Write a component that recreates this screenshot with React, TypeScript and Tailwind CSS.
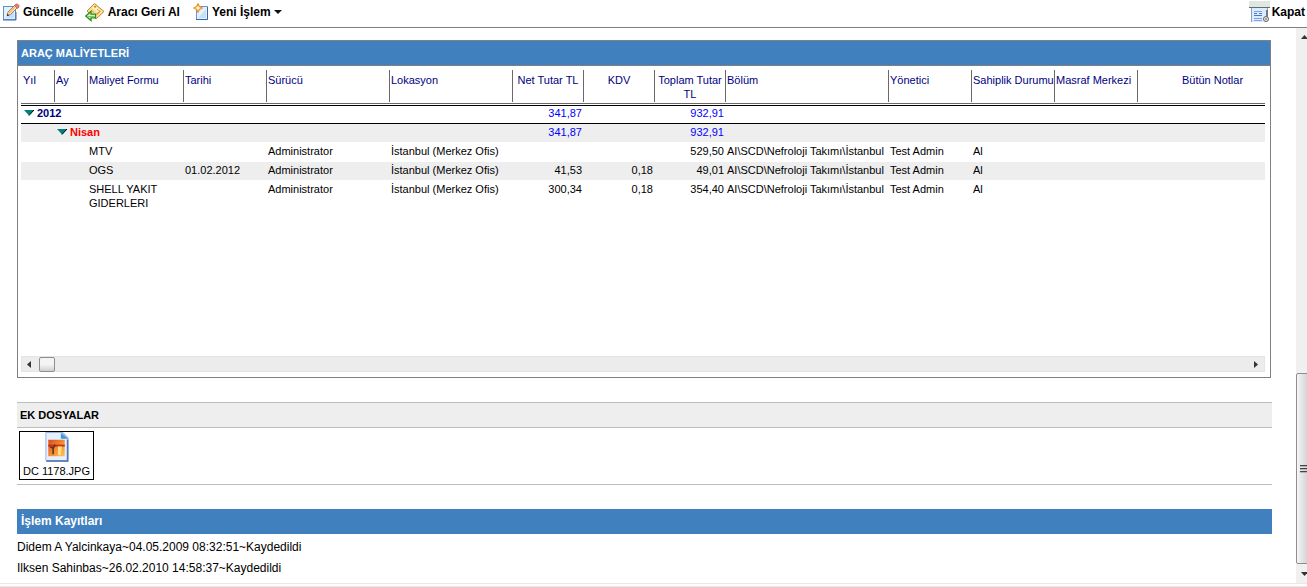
import { useState } from "react";
import clsx from "clsx";

type Align = "left" | "center" | "right";

interface Column {
  title: string;
  width: string;
  align: Align;
}

interface CostRow {
  form: string;
  date?: string;
  driver: string;
  location: string;
  net?: string;
  vat?: string;
  total: string;
  department: string;
  manager: string;
  ownership: string;
}

const columns: Column[] = [
  { title: "Yıl", width: "w-[34px]", align: "left" },
  { title: "Ay", width: "w-[33px]", align: "left" },
  { title: "Maliyet Formu", width: "w-[96px]", align: "left" },
  { title: "Tarihi", width: "w-[83px]", align: "left" },
  { title: "Sürücü", width: "w-[123px]", align: "left" },
  { title: "Lokasyon", width: "w-[123px]", align: "left" },
  { title: "Net Tutar TL", width: "w-[71px]", align: "center" },
  { title: "KDV", width: "w-[71px]", align: "center" },
  { title: "Toplam Tutar TL", width: "w-[71px]", align: "center" },
  { title: "Bölüm", width: "w-[163px]", align: "left" },
  { title: "Yönetici", width: "w-[83px]", align: "left" },
  { title: "Sahiplik Durumu", width: "w-[83px]", align: "left" },
  { title: "Masraf Merkezi", width: "w-[83px]", align: "left" },
  { title: "Bütün Notlar", width: "w-auto", align: "center" },
];

const rows: CostRow[] = [
  {
    form: "MTV",
    driver: "Administrator",
    location: "İstanbul (Merkez Ofis)",
    total: "529,50",
    department: "AI\\SCD\\Nefroloji Takımı\\İstanbul",
    manager: "Test Admin",
    ownership: "Al",
  },
  {
    form: "OGS",
    date: "01.02.2012",
    driver: "Administrator",
    location: "İstanbul (Merkez Ofis)",
    net: "41,53",
    vat: "0,18",
    total: "49,01",
    department: "AI\\SCD\\Nefroloji Takımı\\İstanbul",
    manager: "Test Admin",
    ownership: "Al",
  },
  {
    form: "SHELL YAKIT GIDERLERI",
    driver: "Administrator",
    location: "İstanbul (Merkez Ofis)",
    net: "300,34",
    vat: "0,18",
    total: "354,40",
    department: "AI\\SCD\\Nefroloji Takımı\\İstanbul",
    manager: "Test Admin",
    ownership: "Al",
  },
];

const logs = [
  "Didem A Yalcinkaya~04.05.2009 08:32:51~Kaydedildi",
  "Ilksen Sahinbas~26.02.2010 14:58:37~Kaydedildi",
];

function EditIcon() {
  return (
    <svg width="18" height="18" viewBox="0 0 18 18" aria-hidden="true">
      <rect x="1.500" y="3.500" width="12" height="13" fill="#e4f0fd" stroke="#5a8fd0" />
      <path d="M3 15l9-8v8z" fill="#c6def8" />
      <path d="M1 17h13V9" fill="none" stroke="#3c70b4" />
      <path d="M5 12.500l1-3.500 7-7 2.500 2.500-7 7z" fill="#fde6c0" stroke="#8a6a4c" strokeWidth=".8" />
      <path d="M7 10l6-6" stroke="#f6b868" strokeWidth="1.500" />
      <path d="M12.500 2.500L14 1h1.500L17 2.500V4l-1.500 1.500z" fill="#e8806c" stroke="#b85848" strokeWidth=".7" />
      <path d="M5 13l.5-2.200 1.700 1.700z" fill="#222" />
    </svg>
  );
}

function ReturnIcon() {
  return (
    <svg width="20" height="20" viewBox="0 0 20 20" aria-hidden="true">
      <path d="M9.500 1.500l9.500 8-8 7.500-9-8z" fill="#f9e08c" stroke="#b98a3c" />
      <path d="M9.500 3l7.500 6.500-2.500 2.500L7 5.500z" fill="#fdf3c4" />
      <path d="M8.500 4.500l2-1 1 1.500-1.500 1z" fill="#d8803c" />
      <path d="M12 7l3 2.500M6 8l3 2.500" stroke="#d2a04c" />
      <path d="M11.500 12.500l4-3.500" stroke="#e09a3c" strokeWidth="1.500" />
      <path d="M.8 14L6 9.500v2.700h4.500v3.600H6v2.700z" fill="#d4f2b8" stroke="#2f8a28" strokeWidth="1.300" />
      <path d="M3 14.500h6.500" stroke="#7ccb54" />
    </svg>
  );
}

function NewIcon() {
  return (
    <svg width="16" height="18" viewBox="0 0 16 18" aria-hidden="true">
      <path d="M3.500 3.500h11v13h-11z" fill="#e6f1fd" stroke="#6496d0" />
      <path d="M5 15l8-9v9z" fill="#c9dff8" />
      <path d="M3 16.500h11.500V4" fill="none" stroke="#3468ac" />
      <path
        d="M5 .8l1.400 2.800L9.200 5 6.400 6.400 5 9.200 3.600 6.400.8 5l2.800-1.400z"
        fill="#fff0bc"
        stroke="#e8962c"
        strokeWidth="1.200"
      />
    </svg>
  );
}

function CloseIcon() {
  return (
    <svg width="21" height="21" viewBox="0 0 21 21" aria-hidden="true">
      <path d="M0 0h21v6H0z" fill="#dfe7df" />
      <path d="M0 6.500h21" stroke="#5f6d78" />
      <path d="M2 7h16v14H2z" fill="#dcebff" />
      <path d="M2.500 7v14M18.500 7v8" stroke="#87a0bd" />
      <path d="M5 10.500h8M5 17.500h8M5 19.500h8" stroke="#7fa4df" />
      <path d="M5 12.500h3M10 12.500h3M5 14.500h8" stroke="#4878c8" />
      <circle cx="17" cy="18" r="2.500" fill="#e8e8e8" stroke="#666" />
      <path d="M18 9v7" stroke="#707880" strokeWidth="2" />
      <circle cx="17" cy="18" r=".8" fill="#555" />
    </svg>
  );
}

function ImageFileIcon() {
  return (
    <svg width="26" height="32" viewBox="0 0 26 32" aria-hidden="true">
      <defs>
        <linearGradient id="sky" x1="0" y1="0" x2="1" y2="1">
          <stop offset="0" stopColor="#d84a20" />
          <stop offset=".5" stopColor="#f08a30" />
          <stop offset="1" stopColor="#f8c860" />
        </linearGradient>
      </defs>
      <path d="M2 0h17l6 6v25H2z" fill="#9db7df" />
      <path d="M1.500.5h16l6 6v23h-22z" fill="#e6effc" stroke="#9ab6e2" />
      <path d="M17 1l7 6h-7z" fill="#3f96dc" />
      <path d="M2 30h22V8" fill="none" stroke="#5575b4" strokeWidth="1.500" />
      <rect x="4" y="8" width="17" height="17" fill="url(#sky)" />
      <path d="M4 14h17" stroke="#c8301c" strokeWidth="2" />
      <path d="M14 15h4l-1 9h-3z" fill="#fbdc84" />
      <path d="M6 15l3 2v6M9 17l2-4" fill="none" stroke="#642c22" strokeWidth="1.600" />
    </svg>
  );
}

function Triangle() {
  return (
    <svg width="10" height="6" viewBox="0 0 10 6" aria-hidden="true">
      <path d="M0 0h10L5 5.500z" fill="#008080" />
      <path d="M10 0L5 5.500" stroke="#000" />
    </svg>
  );
}

function GroupToggle({
  label,
  open,
  onClick,
  className,
}: {
  label: string;
  open: boolean;
  onClick: () => void;
  className: string;
}) {
  return (
    <button
      type="button"
      aria-expanded={open}
      onClick={onClick}
      className={clsx("flex items-center gap-[3px] font-bold whitespace-nowrap", className)}
    >
      <Triangle />
      {label}
    </button>
  );
}

function CostTable() {
  const [yearOpen, setYearOpen] = useState(true);
  const [monthOpen, setMonthOpen] = useState(true);

  return (
    <table className="w-full min-w-[1266px] table-fixed border-collapse text-[11px] leading-[14px]">
      <thead className="text-[#000080]">
        <tr>
          {columns.map((c, i) => (
            <th key={c.title} scope="col" className={clsx("p-0 pb-px align-top font-normal", c.width)}>
              <div
                className={clsx(
                  "h-8 pt-[3px]",
                  i === 0 ? "px-[2px]" : "px-px",
                  i < columns.length - 1 && "border-r border-[#696969]",
                  c.align === "center" ? "text-center" : "text-left whitespace-nowrap",
                )}
              >
                {c.title}
              </div>
            </th>
          ))}
        </tr>
        <tr aria-hidden="true">
          <td colSpan={14} className="h-[2px] border-t border-[#696969] p-0" />
        </tr>
      </thead>
      <tbody>
        <tr className="h-[18px] border-y border-black text-[#0000ff]">
          <th colSpan={6} scope="rowgroup" className="p-0 pl-[3px] align-top">
            <GroupToggle
              label="2012"
              open={yearOpen}
              onClick={() => setYearOpen(!yearOpen)}
              className="text-[#000080]"
            />
          </th>
          <td className="p-0 pr-[2px] text-right align-top">341,87</td>
          <td />
          <td className="p-0 pr-[2px] text-right align-top">932,91</td>
          <td colSpan={5} />
        </tr>
        {yearOpen && (
          <tr className="h-[19px] border-y border-white bg-[#eeeeee] text-[#0000ff]">
            <td />
            <th colSpan={5} scope="rowgroup" className="p-0 pt-px pl-[2px] align-top">
              <GroupToggle
                label="Nisan"
                open={monthOpen}
                onClick={() => setMonthOpen(!monthOpen)}
                className="text-[#ff0000]"
              />
            </th>
            <td className="p-0 pt-px pr-[2px] text-right align-top">341,87</td>
            <td />
            <td className="p-0 pt-px pr-[2px] text-right align-top">932,91</td>
            <td colSpan={5} />
          </tr>
        )}
        {yearOpen &&
          monthOpen &&
          rows.map((r, i) => (
            <tr
              key={r.form}
              className={clsx(
                "h-[19px] border-y border-white align-top [&>td]:pt-px [&>td]:pr-[2px] [&>td]:pl-px",
                i % 2 === 1 && "bg-[#eeeeee]",
              )}
            >
              <td />
              <td />
              <td>{r.form}</td>
              <td>{r.date}</td>
              <td>{r.driver}</td>
              <td className="whitespace-nowrap">{r.location}</td>
              <td className="text-right">{r.net}</td>
              <td className="text-right">{r.vat}</td>
              <td className="text-right">{r.total}</td>
              <td className="whitespace-nowrap">{r.department}</td>
              <td>{r.manager}</td>
              <td>{r.ownership}</td>
              <td />
              <td />
            </tr>
          ))}
      </tbody>
    </table>
  );
}

function HorizontalScroll() {
  return (
    <div className="flex h-4 items-center border border-[#e4e4e4] bg-[#ececec]">
      <button type="button" aria-label="Sola kaydır" className="flex h-full w-[17px] items-center pl-[5px]">
        <svg width="4" height="7" viewBox="0 0 4 7">
          <path d="M4 0v7L0 3.500z" fill="#333" />
        </svg>
      </button>
      <div className="h-[15px] w-4 rounded-xs border border-[#8e8e8e] bg-linear-to-b from-[#f4f4f4] from-50% to-[#cfcfd3]" />
      <button type="button" aria-label="Sağa kaydır" className="ml-auto grid h-full w-[17px] place-items-center">
        <svg width="4" height="7" viewBox="0 0 4 7">
          <path d="M0 0v7l4-3.500z" fill="#333" />
        </svg>
      </button>
    </div>
  );
}

function VerticalScroll() {
  return (
    <div className="flex w-[11px] shrink-0 flex-col overflow-hidden bg-[#f0f0f0]">
      <button type="button" aria-label="Yukarı kaydır" className="flex h-[17px] w-[17px] shrink-0 items-center justify-center">
        <svg width="7" height="4" viewBox="0 0 7 4">
          <path d="M0 4h7L3.500 0z" fill="#333" />
        </svg>
      </button>
      <div className="grow-[330] basis-0" />
      <div className="grid w-[17px] grow-[190] basis-0 place-items-center rounded-xs border border-[#8e8e8e] bg-linear-to-r from-[#f6f6f6] to-[#c4c4ca]">
        <svg width="9" height="8" viewBox="0 0 9 8">
          <path d="M0 .5h9M0 3.500h9M0 6.500h9" stroke="#444" />
          <path d="M0 1.500h9M0 4.500h9M0 7.500h9" stroke="#b5b5b5" />
        </svg>
      </div>
      <button type="button" aria-label="Aşağı kaydır" className="flex h-[19px] w-[17px] shrink-0 items-center justify-center">
        <svg width="7" height="4" viewBox="0 0 7 4">
          <path d="M0 0h7L3.500 4z" fill="#333" />
        </svg>
      </button>
    </div>
  );
}

export default function App() {
  return (
    <div className="flex h-screen flex-col overflow-hidden bg-white font-['Liberation_Sans',Arial,sans-serif] text-[12px] text-black">
      <header className="flex h-7 shrink-0 items-center border-b border-[#808080] pr-[2px] pb-[4px] pl-[2px] font-bold">
        <button type="button" className="flex items-center gap-[3px]">
          <EditIcon />
          Güncelle
        </button>
        <button type="button" className="ml-[11px] flex items-center gap-[3px]">
          <ReturnIcon />
          Aracı Geri Al
        </button>
        <button type="button" aria-haspopup="menu" className="ml-[13px] flex items-center gap-[3px]">
          <NewIcon />
          Yeni İşlem
          <svg width="8" height="4" viewBox="0 0 8 4" aria-hidden="true">
            <path d="M0 0h8L4 4z" fill="#111" />
          </svg>
        </button>
        <button type="button" className="ml-auto flex items-center gap-[2px]">
          <CloseIcon />
          Kapat
        </button>
      </header>

      <div className="flex min-h-0 grow">
        <main className="min-w-0 grow overflow-hidden pt-3 pr-6 pl-[17px]">
          <section className="mr-px border border-[#808080]">
            <h2 className="h-[25px] border-b border-[#808080] bg-[#4080bf] pl-[3px] text-[11px] leading-[24px] font-bold text-white">
              ARAÇ MALİYETLERİ
            </h2>
            <div className="pt-1 pr-[5px] pb-[5px] pl-[3px]">
              <div className="h-[286px] overflow-hidden">
                <CostTable />
              </div>
              <HorizontalScroll />
            </div>
          </section>

          <section className="mt-6 border-b border-[#bdbdbd] pb-1">
            <h2 className="h-[26px] border-y border-[#bdbdbd] bg-[#eeeeee] pl-[3px] text-[11px] leading-[24px] font-bold">
              EK DOSYALAR
            </h2>
            <a
              href="#dc-1178"
              className="mt-[3px] ml-[2px] flex h-[49px] w-[75px] flex-col items-center border border-black text-[11px] leading-[16px] whitespace-nowrap"
            >
              <ImageFileIcon />
              DC 1178.JPG
            </a>
          </section>

          <section className="mt-6">
            <h2 className="h-[25px] bg-[#4080bf] pl-[4px] leading-[25px] font-bold text-white">
              İşlem Kayıtları
            </h2>
            <ul className="pt-[3px] leading-[21px]">
              {logs.map((l) => (
                <li key={l}>{l}</li>
              ))}
            </ul>
          </section>
        </main>
        <VerticalScroll />
      </div>
      <footer className="h-[4px] shrink-0 border-y border-[#e8e8e8]" />
    </div>
  );
}
